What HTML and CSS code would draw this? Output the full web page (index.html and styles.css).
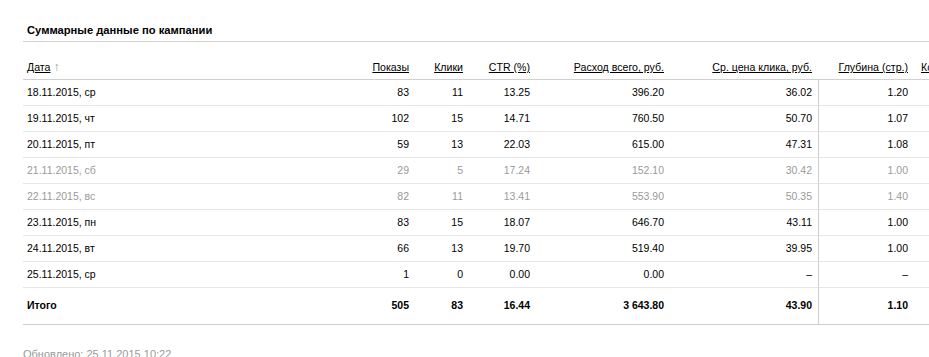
FILE: index.html
```html
<!DOCTYPE html>
<html lang="ru">
<head>
<meta charset="utf-8">
<title>Суммарные данные по кампании</title>
<link rel="stylesheet" href="styles.css">
</head>
<body>
<div class="page">
  <h2 class="title">Суммарные данные по кампании</h2>
  <table class="stats">
    <colgroup>
      <col class="c-date"><col class="c-shows"><col class="c-clicks"><col class="c-ctr"><col class="c-cost"><col class="c-cpc"><col class="c-depth"><col class="c-conv"><col class="c-goal">
    </colgroup>
    <thead>
      <tr>
        <th class="l"><a href="#">Дата</a> <span class="sort">↑</span></th>
        <th><a href="#">Показы</a></th>
        <th><a href="#">Клики</a></th>
        <th><a href="#">CTR (%)</a></th>
        <th><a href="#">Расход всего, руб.</a></th>
        <th><a href="#">Ср. цена клика, руб.</a></th>
        <th><a href="#">Глубина (стр.)</a></th>
        <th class="l"><a href="#">Конверсия (%)</a></th>
        <th class="l"><a href="#">Цена цели, руб.</a></th>
      </tr>
    </thead>
    <tbody>
      <tr><td class="l">18.11.2015, ср</td><td>83</td><td>11</td><td>13.25</td><td>396.20</td><td>36.02</td><td class="sep">1.20</td><td></td><td></td></tr>
      <tr><td class="l">19.11.2015, чт</td><td>102</td><td>15</td><td>14.71</td><td>760.50</td><td>50.70</td><td class="sep">1.07</td><td></td><td></td></tr>
      <tr><td class="l">20.11.2015, пт</td><td>59</td><td>13</td><td>22.03</td><td>615.00</td><td>47.31</td><td class="sep">1.08</td><td></td><td></td></tr>
      <tr class="weekend"><td class="l">21.11.2015, сб</td><td>29</td><td>5</td><td>17.24</td><td>152.10</td><td>30.42</td><td class="sep">1.00</td><td></td><td></td></tr>
      <tr class="weekend"><td class="l">22.11.2015, вс</td><td>82</td><td>11</td><td>13.41</td><td>553.90</td><td>50.35</td><td class="sep">1.40</td><td></td><td></td></tr>
      <tr><td class="l">23.11.2015, пн</td><td>83</td><td>15</td><td>18.07</td><td>646.70</td><td>43.11</td><td class="sep">1.00</td><td></td><td></td></tr>
      <tr><td class="l">24.11.2015, вт</td><td>66</td><td>13</td><td>19.70</td><td>519.40</td><td>39.95</td><td class="sep">1.00</td><td></td><td></td></tr>
      <tr><td class="l">25.11.2015, ср</td><td>1</td><td>0</td><td>0.00</td><td>0.00</td><td>–</td><td class="sep">–</td><td></td><td></td></tr>
    </tbody>
    <tfoot>
      <tr><td class="l">Итого</td><td>505</td><td>83</td><td>16.44</td><td>3 643.80</td><td>43.90</td><td class="sep">1.10</td><td></td><td></td></tr>
    </tfoot>
  </table>
  <p class="updated">Обновлено: 25.11.2015 10:22</p>
</div>
</body>
</html>
```
FILE: styles.css
```css
html, body {
  margin: 0;
  padding: 0;
  overflow: hidden;
  background: #fff;
}
body {
  font-family: "Liberation Sans", Arial, sans-serif;
  color: #000;
}
.page {
  padding-left: 23px;
  width: 1300px;
}
.title {
  margin: 0;
  padding: 23px 0 4px 4px;
  font-size: 11.2px;
  line-height: 14px;
  font-weight: bold;
  border-bottom: 1px solid #d2d2d2;
}
.stats {
  border-collapse: separate;
  border-spacing: 0;
  table-layout: fixed;
  width: 1277px;
  font-size: 10.5px;
}
.c-date { width: 332px; }
.c-shows { width: 60px; }
.c-clicks { width: 54px; }
.c-ctr { width: 67px; }
.c-cost { width: 134px; }
.c-cpc { width: 148px; }
.c-depth { width: 96px; }
.c-conv { width: 110px; }
.c-goal { width: 276px; }
.stats th {
  font-weight: normal;
  font-size: 10.6px;
  line-height: 12px;
  padding: 19px 6px 6px 6px;
  text-align: right;
  vertical-align: bottom;
  white-space: nowrap;
  border-bottom: 1px solid #d0d0d0;
}
.stats th a {
  color: #000;
  text-decoration: underline;
}
.stats th.l, .stats td.l {
  text-align: left;
  padding-left: 4px;
}
.stats th.l:nth-child(n+8) {
  padding-left: 7px;
}
.sort {
  color: #999;
  font-size: 12px;
}
.stats td {
  line-height: 13px;
  padding: 6px 6px;
  text-align: right;
  white-space: nowrap;
  border-bottom: 1px solid #e6e6e6;
}
.stats td.sep {
  border-left: 1px solid #cfcfcf;
}
.weekend td {
  color: #9a9a9a;
}
.stats tfoot td {
  font-weight: bold;
  padding-top: 11px;
  padding-bottom: 12px;
  border-bottom: 1px solid #cccccc;
}
.updated {
  margin: 23px 0 0 0;
  font-size: 11px;
  line-height: 13px;
  color: #9a9a9a;
}
```
